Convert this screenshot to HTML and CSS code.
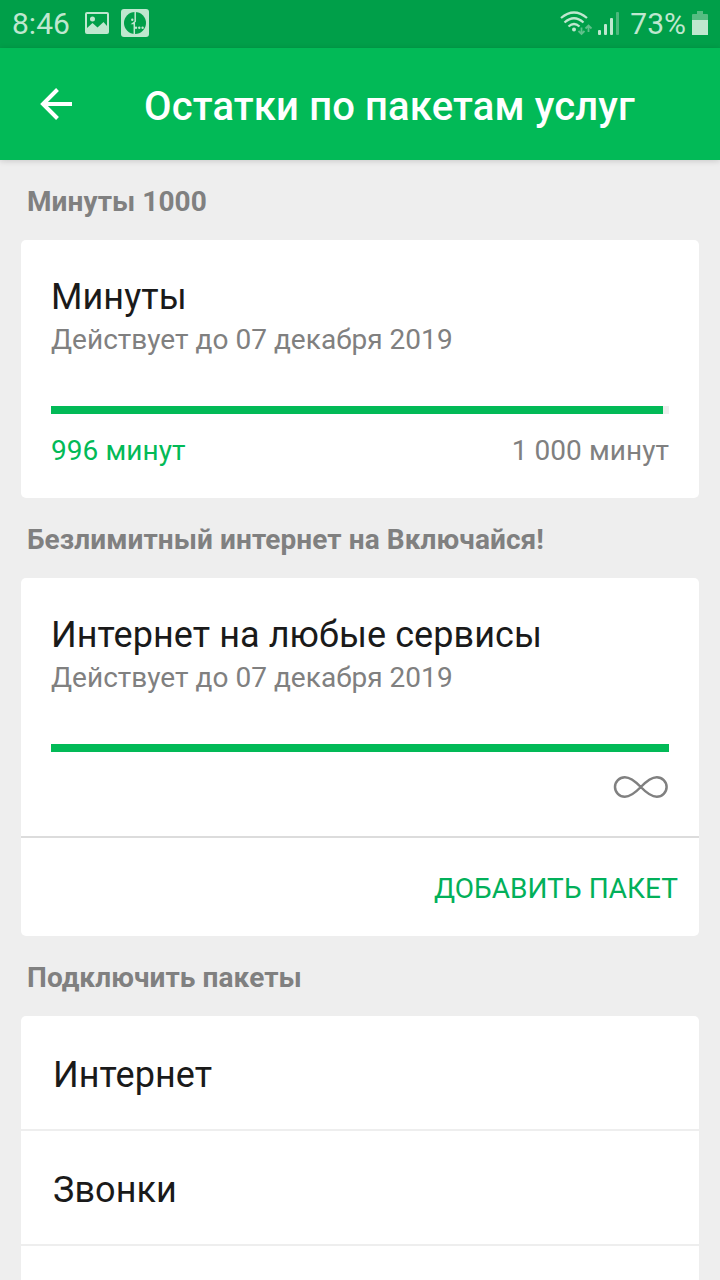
FILE: index.html
```
<!DOCTYPE html>
<html lang="ru">
<head>
<meta charset="utf-8">
<title>Остатки по пакетам услуг</title>
<link rel="stylesheet" href="styles.css">
</head>
<body>
<div class="screen">
  <div class="status">
    <span class="clock">8:46</span>
    <svg class="picture-icon" width="24" height="22" viewBox="0 0 24 22"><path fill="#bfe7cf" fill-rule="evenodd" d="M2 0H22Q24 0 24 2V20Q24 22 22 22H2Q0 22 0 20V2Q0 0 2 0ZM2 2V16L7.500 11L12.500 15.500L18.500 10L22 14V2ZM7.500 4.500A2.500 2.500 0 1 1 7.500 9.500A2.500 2.500 0 1 1 7.500 4.500Z"/></svg>
    <svg class="app-icon" width="28" height="28" viewBox="0 0 28 28"><rect width="28" height="28" rx="3" fill="#bfe7cf"/><circle cx="14" cy="14" r="11" fill="#009f49"/><path d="M14.200 2.500V12.500L11.700 14.500H13.300V25.500" fill="none" stroke="#bfe7cf" stroke-width="1.500"/><g fill="#bfe7cf"><circle cx="11.300" cy="10.700" r="1.200"/><circle cx="15" cy="18.700" r="1.200"/><circle cx="18.300" cy="18.700" r="1.200"/><circle cx="21.600" cy="18.700" r="1.200"/></g></svg>
    <div class="indicators">
      <svg width="33" height="26" viewBox="0 0 33 26"><g fill="none" stroke="#bfe7cf" stroke-width="2.200"><path d="M1 7Q14 -4 27 7"/><path d="M4.500 11.500Q14 3 23.500 11.500"/><path d="M8.500 15.500Q14 10.500 19.500 15.500"/></g><circle cx="14" cy="18.500" r="2" fill="#bfe7cf"/><path d="M21.500 16.500V23M18.500 20L21.500 23L24.500 20M28.500 21V14.500M25.500 17.500L28.500 14.500L31.500 17.500" fill="none" stroke="#5fc08a" stroke-width="1.800"/></svg>
      <svg class="signal" width="22" height="24" viewBox="0 0 22 24"><g fill="#bfe7cf"><rect y="18" width="3" height="5" rx="1"/><rect x="6" y="12" width="3" height="11" rx="1"/><rect x="12" y="6" width="3" height="17" rx="1"/></g><rect x="18" width="3" height="23" rx="1" fill="#4bb87c"/></svg>
      <span class="percent">73%</span>
      <svg class="battery" width="16" height="24" viewBox="0 0 16 24"><path d="M5 0H11V3H15Q16 3 16 4V9H0V4Q0 3 1 3H5Z" fill="#55bd82"/><path d="M0 9H16V24H0Z" fill="#bfe7cf"/></svg>
    </div>
  </div>
  <header class="toolbar">
    <svg class="back" width="32" height="32" viewBox="0 0 32 32"><path d="M32 16H3M17.500 1.500L3 16L17.500 30.500" fill="none" stroke="#fff" stroke-width="4"/></svg>
    <h1>Остатки по пакетам услуг</h1>
  </header>
  <main>
    <h2>Минуты 1000</h2>
    <section class="card">
      <div class="balance">
        <h3>Минуты</h3>
        <p class="valid">Действует до 07 декабря 2019</p>
        <div class="track"><div class="fill" style="width:99.03%"></div></div>
        <div class="amounts"><span class="left">996 минут</span><span>1 000 минут</span></div>
      </div>
    </section>
    <h2>Безлимитный интернет на Включайся!</h2>
    <section class="card">
      <div class="balance">
        <h3>Интернет на любые сервисы</h3>
        <p class="valid">Действует до 07 декабря 2019</p>
        <div class="track"><div class="fill"></div></div>
        <div class="unlimited"><svg width="56" height="24" viewBox="0 0 56 24"><path d="M27.800 12C23 7 18 2.200 11.800 2.200A9.800 9.800 0 0 0 11.800 21.800C18 21.800 23 17 27.800 12C32.600 7 37.600 2.200 43.800 2.200A9.800 9.800 0 0 1 43.800 21.800C37.600 21.800 32.600 17 27.800 12Z" fill="none" stroke="#808080" stroke-width="2.500"/></svg></div>
      </div>
      <div class="action">ДОБАВИТЬ ПАКЕТ</div>
    </section>
    <h2>Подключить пакеты</h2>
    <section class="card list">
      <div class="item">Интернет</div>
      <div class="item">Звонки</div>
      <div class="item"></div>
    </section>
  </main>
</div>
</body>
</html>
```
FILE: styles.css
```
* { box-sizing: border-box; }
body { margin: 0; font-family: Roboto, sans-serif; }
h1, h2, h3, p { margin: 0; white-space: nowrap; }
svg { display: block; flex: none; }
.screen { height: 1280px; overflow: hidden; background: #eee; }

.status { height: 48px; background: #009f49; color: #bfe7cf; display: flex; align-items: flex-start; padding: 0 12px; font-size: 30px; line-height: 48px; }
.clock { width: 73px; }
.picture-icon { margin-top: 12px; }
.app-icon { margin: 9px 0 0 12px; }
.indicators { margin-left: auto; display: flex; align-items: flex-start; }
.indicators svg { margin-top: 11px; }
.indicators .signal { margin: 12px 10px 0 5px; }
.indicators .battery { margin-left: 6px; }

.toolbar { position: relative; height: 112px; background: #02ba57; display: flex; align-items: center; padding-left: 40px; box-shadow: 0 1px 6px rgba(0, 0, 0, .16); }
.toolbar h1 { margin-left: 72px; padding-top: 5px; color: #fff; font-size: 40px; font-weight: 500; line-height: 48px; letter-spacing: .14px; }

main { padding: 0 21px; }
h2 { height: 80px; padding: 24px 6px 0; font-size: 28px; line-height: 36px; font-weight: 700; letter-spacing: .08px; color: #808080; }
.card { background: #fff; border-radius: 5px; }
.balance { height: 258px; padding: 36px 30px 0; }
h3 { font-size: 36px; line-height: 42px; font-weight: 400; letter-spacing: .07px; color: #1a1a1a; }
.valid { margin-top: 5px; font-size: 28px; line-height: 34px; letter-spacing: .03px; color: #808080; }
.track { height: 8px; margin-top: 49px; background: #eee; }
.fill { height: 8px; background: #02ba57; }
.amounts { display: flex; justify-content: space-between; margin-top: 20px; font-size: 28px; line-height: 34px; letter-spacing: .06px; color: #808080; }
.amounts .left { color: #02ba57; }
.unlimited { display: flex; justify-content: flex-end; margin-top: 23px; }
.action { height: 100px; padding: 1px 21px 0; border-top: 2px solid #dcdcdc; text-align: right; font-size: 28px; line-height: 100px; letter-spacing: .04px; color: #02b05a; }
.list { height: 300px; }
.item { height: 115px; padding: 1px 32px 0; border-bottom: 2px solid #eee; font-size: 36px; line-height: 117px; letter-spacing: .07px; color: #1a1a1a; }
```
